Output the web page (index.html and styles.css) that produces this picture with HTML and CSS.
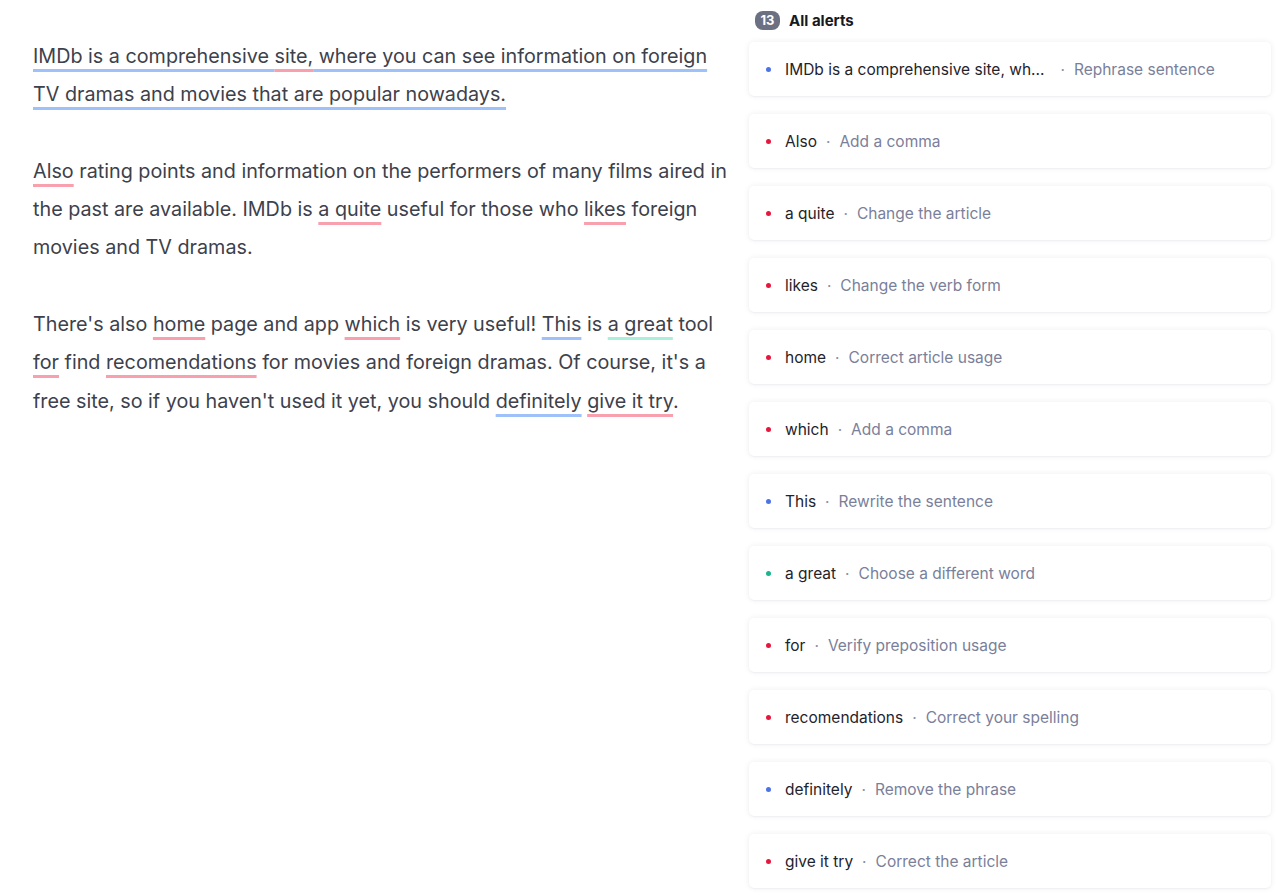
FILE: index.html
```html
<!DOCTYPE html>
<html lang="en">
<head>
<meta charset="utf-8">
<title>All alerts</title>
<link rel="stylesheet" href="styles.css">
</head>
<body>
<div class="app">
  <main class="editor">
    <div class="doc">
      <p><span class="mark blue">IMDb is a comprehensive </span><span class="mark red">site,</span><span class="mark blue"> where you can see information on foreign TV dramas and movies that are popular nowadays.</span></p>
      <p><span class="mark red">Also</span> rating points and information on the performers of many films aired in the past are available. IMDb is <span class="mark red">a quite</span> useful for those who <span class="mark red">likes</span> foreign movies and TV dramas.</p>
      <p>There's also <span class="mark red">home</span> page and app <span class="mark red">which</span> is very useful! <span class="mark blue">This</span> is <span class="mark green">a great</span> tool <span class="mark red">for</span> find <span class="mark red">recomendations</span> for movies and foreign dramas. Of course, it's a free site, so if you haven't used it yet, you should <span class="mark blue">definitely</span> <span class="mark red">give it try</span>.</p>
    </div>
  </main>
  <aside class="sidebar">
    <header class="side-head">
      <span class="badge">13</span>
      <span class="side-title">All alerts</span>
    </header>
    <ul class="alerts">
      <li class="card"><span class="dot d-blue"></span><span class="word long">IMDb is a comprehensive site, wh...</span><span class="sep">·</span><span class="hint">Rephrase sentence</span></li>
      <li class="card"><span class="dot d-red"></span><span class="word">Also</span><span class="sep">·</span><span class="hint">Add a comma</span></li>
      <li class="card"><span class="dot d-red"></span><span class="word">a quite</span><span class="sep">·</span><span class="hint">Change the article</span></li>
      <li class="card"><span class="dot d-red"></span><span class="word">likes</span><span class="sep">·</span><span class="hint">Change the verb form</span></li>
      <li class="card"><span class="dot d-red"></span><span class="word">home</span><span class="sep">·</span><span class="hint">Correct article usage</span></li>
      <li class="card"><span class="dot d-red"></span><span class="word">which</span><span class="sep">·</span><span class="hint">Add a comma</span></li>
      <li class="card"><span class="dot d-blue"></span><span class="word">This</span><span class="sep">·</span><span class="hint">Rewrite the sentence</span></li>
      <li class="card"><span class="dot d-green"></span><span class="word">a great</span><span class="sep">·</span><span class="hint">Choose a different word</span></li>
      <li class="card"><span class="dot d-red"></span><span class="word">for</span><span class="sep">·</span><span class="hint">Verify preposition usage</span></li>
      <li class="card"><span class="dot d-red"></span><span class="word">recomendations</span><span class="sep">·</span><span class="hint">Correct your spelling</span></li>
      <li class="card"><span class="dot d-blue"></span><span class="word">definitely</span><span class="sep">·</span><span class="hint">Remove the phrase</span></li>
      <li class="card"><span class="dot d-red"></span><span class="word">give it try</span><span class="sep">·</span><span class="hint">Correct the article</span></li>
    </ul>
  </aside>
</div>
</body>
</html>
```

FILE: styles.css
```css
* { box-sizing: border-box; }

html, body {
  margin: 0;
  padding: 0;
  background: #ffffff;
  height: 100%;
  overflow: hidden;
}

body {
  font-family: Inter, "Noto Sans", "Liberation Sans", sans-serif;
  color: #1f232b;
}

.app {
  display: grid;
  grid-template-columns: 749px 522px;
  height: 893px;
}

.editor {
  padding: 37px 0 0 33px;
}

.doc {
  width: 697px;
  font-size: 19.75px;
  line-height: 38.3px;
  color: #3d414b;
}

.doc p {
  margin: 0 0 38.3px 0;
}

.mark {
  text-decoration-line: underline;
  text-decoration-thickness: 3px;
  text-underline-offset: 6px;
  text-decoration-skip-ink: none;
}

.mark.blue { text-decoration-color: #9fc1f9; }
.mark.red { text-decoration-color: #f8a0ae; }
.mark.green { text-decoration-color: #aaefdb; }

.sidebar {
  display: flex;
  flex-direction: column;
}

.side-head {
  display: flex;
  align-items: center;
  gap: 9px;
  height: 20px;
  margin: 10px 0 12px 6px;
}

.badge {
  display: inline-flex;
  align-items: center;
  justify-content: center;
  width: 25px;
  height: 19px;
  border-radius: 8px;
  background: #6c7083;
  color: #ffffff;
  font-size: 13px;
  font-weight: 700;
}

.side-title {
  font-size: 15px;
  font-weight: 700;
  color: #16191f;
}

.alerts {
  list-style: none;
  margin: 0;
  padding: 0;
  display: flex;
  flex-direction: column;
  gap: 18px;
}

.card {
  display: flex;
  align-items: center;
  height: 54px;
  padding-left: 17px;
  background: #ffffff;
  border-radius: 5px;
  box-shadow: 0 0 6px rgba(20, 30, 50, 0.07), 0 1px 2px rgba(20, 30, 50, 0.04);
  font-size: 15.5px;
}

.dot {
  width: 5px;
  height: 5px;
  border-radius: 50%;
  margin-right: 14px;
  flex: none;
}

.d-blue { background: #4b73e6; }
.d-red { background: #e8163d; }
.d-green { background: #18b58e; }

.word {
  color: #1f232b;
}

.word.long {
  margin-right: 7px;
}

.sep {
  color: #8a8fa3;
  margin: 0 9px;
}

.hint {
  color: #7a809a;
}
```
